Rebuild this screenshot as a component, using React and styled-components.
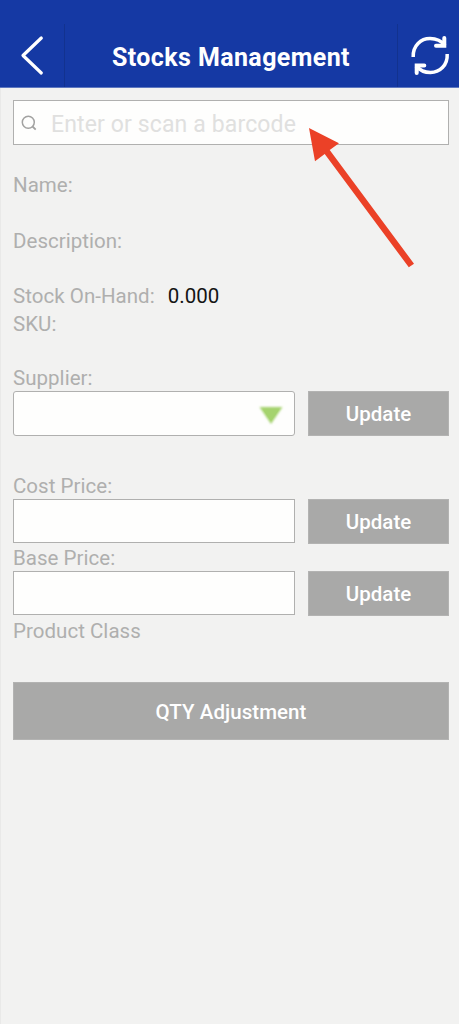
import React from 'react';
import styled, { createGlobalStyle } from 'styled-components';

const colors = {
  header: '#1539a4',
  divider: '#12328f',
  page: '#f2f2f1',
  label: '#afafae',
  border: '#b0b0af',
  button: '#a9a9a8',
  arrow: '#eb4127',
};

const GlobalStyle = createGlobalStyle`
  body {
    margin: 0;
    background: ${colors.page};
    font-family: Roboto, "Liberation Sans", sans-serif;
  }

  *, *::before, *::after {
    box-sizing: border-box;
  }
`;

const Screen = styled.div`
  position: relative;
  min-height: 1024px;
  background: ${colors.page};
  border-left: 1px solid #e9e9e8;
`;

const Header = styled.header`
  display: flex;
  height: 88px;
  margin-left: -1px;
  padding-top: 24px;
  background: ${colors.header};
  border-bottom: 1px solid #5e78c0;
`;

const HeaderButton = styled.button`
  display: flex;
  flex: none;
  width: ${props => props.$width};
  padding: 0;
  border: 0;
  border-${props => props.$side}: 1px solid ${colors.divider};
  background: none;
  color: white;
  cursor: pointer;
`;

const Title = styled.h1`
  flex: 1;
  margin: 0;
  color: white;
  font-size: 25px;
  font-weight: 700;
  letter-spacing: 0.4px;
  line-height: 67px;
  text-align: center;
  white-space: nowrap;
`;

const Content = styled.main`
  padding: 12px 10px 0 12px;
`;

const SearchBox = styled.label`
  display: flex;
  align-items: center;
  height: 45px;
  padding-left: 6px;
  background: #fefefd;
  border: 1px solid ${colors.border};
`;

const SearchInput = styled.input`
  flex: 1;
  min-width: 0;
  margin-left: 13px;
  padding: 3px 0 0;
  border: 0;
  outline: 0;
  background: none;
  font-family: inherit;
  font-size: 23px;
  letter-spacing: 0.13px;

  &::placeholder {
    color: #e0e0df;
    opacity: 1;
  }
`;

const Details = styled.div`
  height: 193.7px;
  margin-top: 26.4px;
`;

const Detail = styled.div`
  display: flex;
  gap: 13px;
  height: ${props => (props.$tall ? '55.3px' : '27.6px')};
  color: ${colors.label};
  font-size: 20.5px;
  letter-spacing: 0.03px;
  line-height: 28px;
  white-space: nowrap;
`;

const Value = styled.span`
  color: #141414;
`;

const Field = styled.div`
  margin-bottom: ${props => props.$gap || '2px'};
`;

const Label = styled.div`
  height: 26px;
  color: ${colors.label};
  font-size: 20.5px;
  letter-spacing: 0.03px;
  line-height: 26px;
`;

const FieldRow = styled.div`
  display: grid;
  grid-template-columns: 282px 1fr;
  gap: 13px;
  height: 45px;
`;

const TextInput = styled.input`
  width: 100%;
  height: 44px;
  padding: 0 10px;
  border: 1px solid ${colors.border};
  border-radius: 0;
  outline: 0;
  background: #fefefd;
  font-family: inherit;
  font-size: 20.5px;
`;

const Select = styled.div`
  display: flex;
  align-items: center;
  justify-content: flex-end;
  padding-right: 9px;
  border: 1px solid ${colors.border};
  border-radius: 3px;
  background: #fefefd;
`;

const Button = styled.button`
  width: 100%;
  height: ${props => (props.$large ? '58px' : '45px')};
  margin-top: ${props => (props.$large ? '38px' : '0')};
  padding: ${props => (props.$large ? '2px 0 0' : '1px 0 0')};
  border: 1px solid #b3b3b2;
  background: ${colors.button};
  color: white;
  font-family: inherit;
  font-size: 20.5px;
  font-weight: 500;
  letter-spacing: 0.05px;
  cursor: pointer;
`;

// lies over the page, pointing at the search box
const Pointer = styled.svg`
  position: absolute;
  top: 124px;
  left: 305px;
  pointer-events: none;
`;

const BackIcon = () => (
  <svg width="64" height="63" viewBox="0 24 64 63" fill="none">
    <path d="M41.3 38 23 55.5 41.3 73" stroke="currentColor" strokeWidth="3.2" strokeLinecap="round" strokeLinejoin="round" />
  </svg>
);

const RefreshIcon = () => (
  <svg width="61" height="63" viewBox="398 24 61 63" fill="none" stroke="currentColor" strokeWidth="3.5">
    <path d="M413.2 57C412.7 45.5 421 38.6 430 38.6C436.5 38.6 441.5 41 445 45.5" />
    <path d="M444.3 38V45.7H436" strokeWidth="4" strokeLinecap="round" />
    <path d="M447.2 54C447.8 65.5 439.5 72.5 430.5 72.5C424 72.5 419.5 70 416 66" />
    <path d="M416.7 73V65.4H424.3" strokeWidth="4" strokeLinecap="round" />
  </svg>
);

const SearchIcon = () => (
  <svg width="18" height="18" viewBox="20 113 18 18" fill="none" stroke="#a2a2a1" strokeWidth="1.5">
    <circle cx="28.3" cy="121.2" r="6" />
    <path d="M32.5 125.5 35.7 128.7" strokeWidth="1.8" />
  </svg>
);

const TriangleIcon = () => (
  <svg width="28" height="24" viewBox="0 0 28 24">
    <defs>
      <filter id="soft" x="-20%" y="-20%" width="140%" height="140%">
        <feGaussianBlur stdDeviation="1" />
      </filter>
    </defs>
    <path d="M2.5 5H25.5L14 22Z" fill="#a5d36e" filter="url(#soft)" />
    <path d="M6 7.5H22L14 19Z" fill="#a5d36e" />
  </svg>
);

function PriceField({ label, gap }) {
  return (
    <Field $gap={gap}>
      <Label>{label}</Label>
      <FieldRow>
        <TextInput aria-label={label} />
        <Button>Update</Button>
      </FieldRow>
    </Field>
  );
}

function App() {
  return (
    <>
      <GlobalStyle />
      <Screen>
        <Header>
          <HeaderButton $width="65px" $side="right" aria-label="Back">
            <BackIcon />
          </HeaderButton>
          <Title>Stocks Management</Title>
          <HeaderButton $width="62px" $side="left" aria-label="Refresh">
            <RefreshIcon />
          </HeaderButton>
        </Header>

        <Content>
          <SearchBox>
            <SearchIcon />
            <SearchInput placeholder="Enter or scan a barcode" />
          </SearchBox>

          <Details>
            <Detail $tall>Name:</Detail>
            <Detail $tall>Description:</Detail>
            <Detail>
              Stock On-Hand: <Value>0.000</Value>
            </Detail>
            <Detail>SKU:</Detail>
          </Details>

          <Field $gap="37px">
            <Label>Supplier:</Label>
            <FieldRow>
              <Select>
                <TriangleIcon />
              </Select>
              <Button>Update</Button>
            </FieldRow>
          </Field>

          <PriceField label="Cost Price:" gap="1px" />
          <PriceField label="Base Price:" />
          <Label>Product Class</Label>

          <Button $large>QTY Adjustment</Button>
        </Content>

        <Pointer width="112" height="148" viewBox="306 124 112 148">
          <path d="M309 128 339 143.3 329.7 150 414 263.7 408.8 267.3 324.7 154 315 161.3Z" fill={colors.arrow} />
        </Pointer>
      </Screen>
    </>
  );
}

export default App;
